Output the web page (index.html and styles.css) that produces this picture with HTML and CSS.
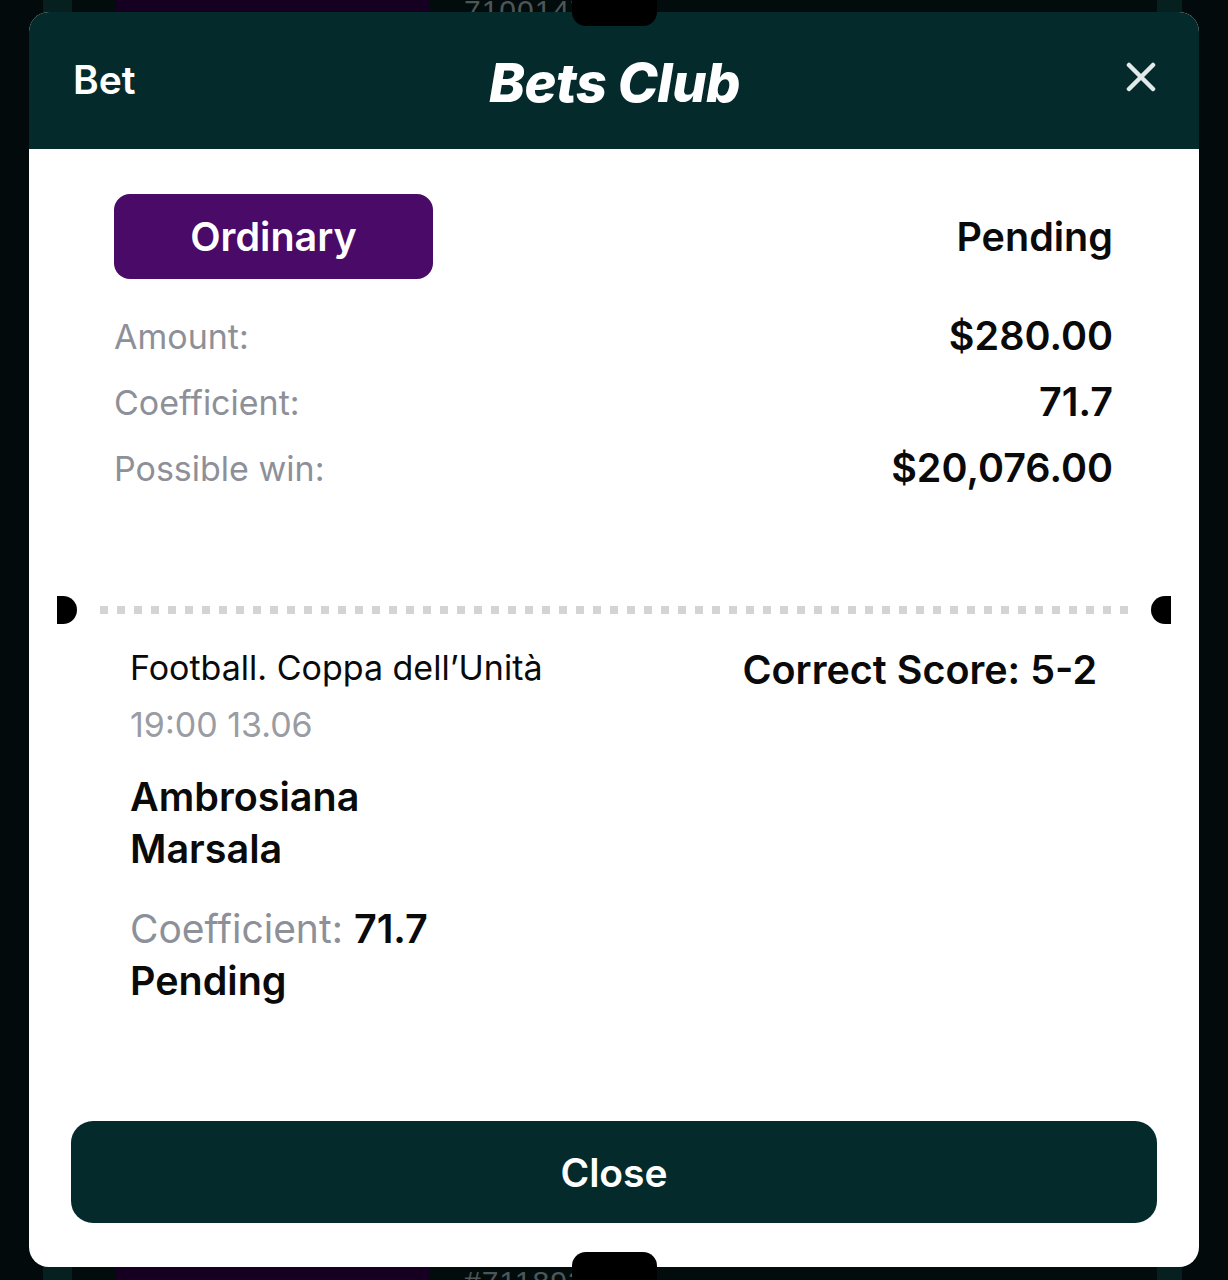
FILE: index.html
```html
<!DOCTYPE html>
<html lang="en">
<head>
<meta charset="utf-8">
<title>Bets Club</title>
<link rel="stylesheet" href="styles.css">
</head>
<body>
<div class="backdrop">
  <div class="bg-card bg-card-top">
    <div class="bg-tag"></div>
    <div class="bg-num">7100147</div>
  </div>
  <div class="bg-gap"></div>
  <div class="bg-card bg-card-bottom">
    <div class="bg-tag"></div>
    <div class="bg-num">#7118932</div>
  </div>
</div>

<div class="modal">
  <header class="modal-header">
    <div class="hdr-left">Bet</div>
    <div class="hdr-title">Bets Club</div>
    <div class="hdr-right">
      <svg class="close-icon" width="30" height="30" viewBox="0 0 30 30" aria-hidden="true">
        <path d="M3 3 L27 27 M27 3 L3 27" stroke="#e2eaea" stroke-width="4.5" stroke-linecap="round"/>
      </svg>
    </div>
  </header>
  <div class="modal-body">
    <div class="summary">
      <div class="row row-top">
        <div class="badge">Ordinary</div>
        <div class="val">Pending</div>
      </div>
      <div class="row">
        <div class="lbl">Amount:</div>
        <div class="val">$280.00</div>
      </div>
      <div class="row">
        <div class="lbl">Coefficient:</div>
        <div class="val">71.7</div>
      </div>
      <div class="row">
        <div class="lbl">Possible win:</div>
        <div class="val">$20,076.00</div>
      </div>
    </div>

    <div class="separator">
      <span class="half half-left"></span>
      <span class="dots"></span>
      <span class="half half-right"></span>
    </div>

    <div class="event">
      <div class="event-left">
        <div class="ev-league">Football. Coppa dell’Unità</div>
        <div class="ev-date">19:00 13.06</div>
        <div class="ev-teams">
          <div>Ambrosiana</div>
          <div>Marsala</div>
        </div>
        <div class="ev-coef"><span class="lbl-inline">Coefficient: </span>71.7</div>
        <div class="ev-status">Pending</div>
      </div>
      <div class="event-right">Correct Score: 5-2</div>
    </div>

    <div class="spacer"></div>
    <button class="close-btn" type="button">Close</button>
  </div>
</div>

<div class="notch notch-top"></div>
<div class="notch notch-bottom"></div>
</body>
</html>
```

FILE: styles.css
```css
* { box-sizing: border-box; }

html, body {
  margin: 0;
  padding: 0;
}

body {
  width: 1228px;
  height: 1280px;
  overflow: hidden;
  background: #020a0b;
  font-family: Inter, "Noto Sans", "Liberation Sans", sans-serif;
  position: relative;
}

/* ---------- dimmed background content ---------- */
.backdrop {
  display: flex;
  flex-direction: column;
  height: 1280px;
  padding: 0 46px 0 43px;
}

.bg-card {
  display: flex;
  gap: 34px;
  background: #020c0c;
  border-left: 29px solid #06201f;
  border-right: 25px solid #06201f;
  padding-left: 44px;
  overflow: hidden;
}

.bg-card-top {
  height: 14px;
  align-items: flex-end;
}

.bg-gap { flex: 1; }

.bg-card-bottom {
  height: 20px;
  align-items: flex-start;
}

.bg-tag {
  width: 314px;
  height: 100%;
  flex: none;
  background: #160022;
}

.bg-num {
  color: #4d5656;
  font-family: "Liberation Sans", sans-serif;
  font-size: 30px;
  letter-spacing: 1px;
  white-space: nowrap;
}

.bg-card-top .bg-num { line-height: 6px; }
.bg-card-bottom .bg-num { line-height: 44px; }

/* ---------- modal ---------- */
.modal {
  position: absolute;
  left: 29px;
  top: 12px;
  width: 1170px;
  height: 1255px;
  border-radius: 20px;
  overflow: hidden;
  background: #ffffff;
  display: flex;
  flex-direction: column;
}

.modal-header {
  height: 137px;
  flex: none;
  background: #042a2c;
  display: grid;
  grid-template-columns: 1fr auto 1fr;
  align-items: center;
  padding: 0 43px 0 44px;
  color: #ffffff;
}

.hdr-left {
  font-size: 39px;
  font-weight: 600;
  padding-bottom: 2px;
}

.hdr-title {
  font-size: 54px;
  font-weight: 800;
  font-style: italic;
  letter-spacing: -0.5px;
  padding-top: 4px;
}

.hdr-right {
  display: flex;
  justify-content: flex-end;
  padding-bottom: 8px;
}

.close-icon { display: block; }

.modal-body {
  flex: 1;
  display: flex;
  flex-direction: column;
  padding: 45px 0 44px;
}

.summary {
  padding: 0 86px 0 85px;
  display: flex;
  flex-direction: column;
}

.row {
  display: flex;
  justify-content: space-between;
  align-items: center;
  height: 66px;
}

.row-top {
  height: 85px;
  margin-bottom: 24px;
}

.badge {
  width: 319px;
  height: 85px;
  border-radius: 16px;
  background: #4a0a67;
  color: #ffffff;
  font-size: 39.5px;
  font-weight: 600;
  display: flex;
  align-items: center;
  justify-content: center;
}

.lbl {
  color: #8e9099;
  font-size: 34px;
  font-weight: 400;
}

.val {
  color: #0a0a0a;
  font-size: 39.5px;
  font-weight: 600;
}

/* ---------- separator ---------- */
.separator {
  margin-top: 95px;
  display: flex;
  align-items: center;
  height: 28px;
  padding: 0 28px;
}

.half {
  width: 20px;
  height: 28px;
  background: #000000;
  flex: none;
}

.half-left { border-radius: 0 14px 14px 0; }
.half-right { border-radius: 14px 0 0 14px; }

.dots {
  flex: 1;
  height: 8px;
  margin: 0 23px;
  background-image: linear-gradient(to right, #d4d4d6 0 8px, transparent 8px 17px);
  background-size: 17px 8px;
  background-repeat: repeat-x;
}

/* ---------- event ---------- */
.event {
  display: flex;
  justify-content: space-between;
  padding: 24px 102px 0 101px;
}

.event-left {
  display: flex;
  flex-direction: column;
}

.ev-league {
  font-size: 34px;
  color: #0a0a0a;
  line-height: 40px;
}

.ev-date {
  font-size: 34px;
  color: #9a9ca3;
  line-height: 40px;
  margin-top: 17px;
}

.ev-teams {
  margin-top: 26px;
  font-size: 39.5px;
  font-weight: 600;
  color: #0a0a0a;
  line-height: 52px;
}

.ev-coef {
  margin-top: 28px;
  font-size: 39.5px;
  font-weight: 600;
  color: #0a0a0a;
  line-height: 52px;
}

.lbl-inline {
  color: #8e9099;
  font-weight: 400;
  font-size: 39px;
}

.ev-status {
  font-size: 39.5px;
  font-weight: 600;
  color: #0a0a0a;
  line-height: 52px;
}

.event-right {
  font-size: 39.5px;
  font-weight: 600;
  color: #0a0a0a;
  line-height: 44px;
}

.spacer { flex: 1; }

.close-btn {
  margin: 0 42px;
  height: 102px;
  border: none;
  border-radius: 22px;
  background: #042a2c;
  color: #ffffff;
  font-family: inherit;
  font-size: 39px;
  font-weight: 600;
  cursor: pointer;
}

/* ---------- notches overlaying card edges ---------- */
.notch {
  position: absolute;
  left: 572px;
  width: 85px;
  background: #000000;
}

.notch-top {
  top: 0;
  height: 26px;
  border-radius: 0 0 14px 14px;
}

.notch-bottom {
  top: 1252px;
  height: 28px;
  border-radius: 14px 14px 0 0;
}
```
